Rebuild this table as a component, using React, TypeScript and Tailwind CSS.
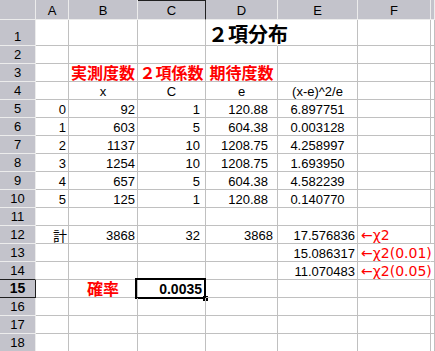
import React from 'react';

type Cell = { t?: string; k?: string; sel?: boolean };

const COLS = 'grid grid-cols-[36px_33px_69px_68px_72px_80px_73px_1fr]';
const JP = "font-['Noto_Sans_CJK_JP',sans-serif]";

// alignments
const R = 'justify-end pr-[2px]';
const RC = 'justify-end pr-[5px]';
const RD = 'justify-end pr-[9px]';
const MID = 'justify-center';
const LABEL = `justify-center text-[16px] font-bold text-[#ff0000] ${JP}`;
const CHI = "justify-start pl-[3px] text-[14px] text-[#ff0000] font-['DejaVu_Sans',sans-serif]";

const e: Cell = {};

const rows: Cell[][] = [
  [e, e, e, { t: '２項分布', k: `justify-start pl-[2px] text-[20px] font-bold ${JP} border-r-transparent` }, e, e, e],
  [e, e, e, e, e, e, e],
  [e, { t: '実測度数', k: LABEL }, { t: '２項係数', k: LABEL }, { t: '期待度数', k: LABEL }, e, e, e],
  [e, { t: 'x', k: MID }, { t: 'C', k: MID }, { t: 'e', k: MID }, { t: '(x-e)^2/e', k: MID }, e, e],
  [{ t: '0', k: R }, { t: '92', k: R }, { t: '1', k: RC }, { t: '120.88', k: RD }, { t: '6.897751', k: MID }, e, e],
  [{ t: '1', k: R }, { t: '603', k: R }, { t: '5', k: RC }, { t: '604.38', k: RD }, { t: '0.003128', k: MID }, e, e],
  [{ t: '2', k: R }, { t: '1137', k: R }, { t: '10', k: RC }, { t: '1208.75', k: RD }, { t: '4.258997', k: MID }, e, e],
  [{ t: '3', k: R }, { t: '1254', k: R }, { t: '10', k: RC }, { t: '1208.75', k: RD }, { t: '1.693950', k: MID }, e, e],
  [{ t: '4', k: R }, { t: '657', k: R }, { t: '5', k: RC }, { t: '604.38', k: RD }, { t: '4.582239', k: MID }, e, e],
  [{ t: '5', k: R }, { t: '125', k: R }, { t: '1', k: RC }, { t: '120.88', k: RD }, { t: '0.140770', k: MID }, e, e],
  [e, e, e, e, e, e, e],
  [{ t: '計', k: `justify-end pr-[1px] text-[14px] ${JP}` }, { t: '3868', k: R }, { t: '32', k: RC }, { t: '3868', k: 'justify-end pr-[4px]' }, { t: '17.576836', k: R }, { t: '←χ2', k: CHI }, e],
  [e, e, e, e, { t: '15.086317', k: R }, { t: '←χ2(0.01)', k: `${CHI} border-r-transparent` }, e],
  [e, e, e, e, { t: '11.070483', k: R }, { t: '←χ2(0.05)', k: `${CHI} border-r-transparent` }, e],
  [e, { t: '確率', k: LABEL }, { t: '0.0035', k: 'justify-end pr-[3px] font-bold text-[14px]', sel: true }, e, e, e, e],
  [e, e, e, e, e, e, e],
  [e, e, e, e, e, e, e],
  [e, e, e, e, e, e, e],
];

const HDR = 'flex items-end justify-center pb-[2px] bg-[#c3c3cb] border-r border-b border-[#ececec] text-[13px] leading-none text-black';

export default function App() {
  return (
    <div className="w-[435px] h-[351px] overflow-hidden bg-white text-black font-['Liberation_Sans','Noto_Sans_CJK_JP',sans-serif]">
      {/* column headers */}
      <div className={`${COLS} h-[20px]`}>
        <div className={HDR} />
        <div className={HDR}>A</div>
        <div className={HDR}>B</div>
        <div className={`${HDR} border-t border-t-[#202020] border-r-[#202020]`}>C</div>
        <div className={HDR}>D</div>
        <div className={HDR}>E</div>
        <div className={HDR}>F</div>
        <div className={HDR} />
      </div>

      {rows.map((row, i) => (
        <div key={i} className={`${COLS} ${i === 0 ? 'h-[26px]' : 'h-[18px]'}`}>
          <div
            className={`${HDR} ${i === 14 ? 'font-bold text-[14px] border-b-[#202020] border-r-[#202020]' : ''} ${i === 13 ? 'border-b-[#202020]' : ''}`}
          >
            {i + 1}
          </div>
          {row.map((c, j) => (
            <div
              key={j}
              className={`relative flex items-end pb-[1px] whitespace-nowrap text-[13px] leading-none border-r border-b border-[#c0c0c0] ${c.k ?? ''}`}
            >
              {c.t && <span className="relative z-10">{c.t}</span>}
              {c.sel && (
                <>
                  <div className="absolute left-[-3px] top-[-2px] right-[-1px] bottom-[-2px] border-2 border-black" />
                  <div className="absolute right-[-3px] bottom-[-4px] w-[5px] h-[5px] bg-black" />
                </>
              )}
            </div>
          ))}
        </div>
      ))}
    </div>
  );
}
